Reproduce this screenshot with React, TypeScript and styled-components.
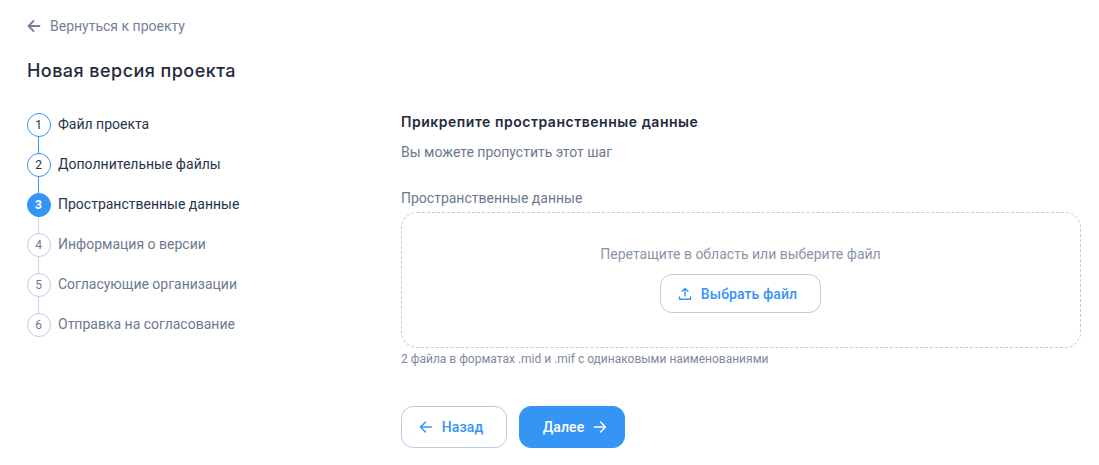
import React from 'react';
import styled, { createGlobalStyle } from 'styled-components';

const GlobalStyle = createGlobalStyle`
    html, body {
        margin: 0;
        padding: 0;
        background: #fff;
        font-family: Roboto, "Liberation Sans", sans-serif;
    }
`;

const Page = styled.div`
    width: 1099px;
    height: 465px;
    box-sizing: border-box;
    padding: 16px 18px 0 27px;
    overflow: hidden;
`;

const BackLink = styled.a`
    display: flex;
    align-items: center;
    gap: 9px;
    height: 20px;
    font-size: 14px;
    line-height: 20px;
    color: #74809a;
`;

const Title = styled.h1`
    margin: 22px 0 0;
    font-family: Inter, sans-serif;
    font-size: 18px;
    line-height: 26px;
    font-weight: 500;
    letter-spacing: 0.45px;
    color: #1f2b3d;
`;

const Columns = styled.div`
    display: grid;
    grid-template-columns: 374px 680px;
    margin-top: 28px;
`;

const Steps = styled.ol`
    list-style: none;
    margin: 1px 0 0 -0.5px;
    padding: 0;
    display: flex;
    flex-direction: column;
    gap: 16px;
`;

const Step = styled.li<{ $state: 'done' | 'active' | 'todo' }>`
    display: flex;
    align-items: center;
    gap: 7.5px;
    height: 24px;
    position: relative;
    font-size: 14px;
    color: ${(p) => (p.$state === 'todo' ? '#6d7990' : '#27344a')};

    &:not(:last-child)::after {
        content: '';
        position: absolute;
        left: 11.5px;
        top: 24px;
        width: 1px;
        height: 16px;
        background: ${(p) => (p.$state === 'done' ? '#3595f5' : '#c9d8ec')};
    }
`;

const StepLabel = styled.span`
    margin-bottom: 2px;
`;

const StepNumber = styled.span<{ $state: 'done' | 'active' | 'todo' }>`
    box-sizing: border-box;
    flex: none;
    width: 24px;
    height: 24px;
    border-radius: 50%;
    display: flex;
    align-items: center;
    justify-content: center;
    font-size: 12px;
    font-weight: ${(p) => (p.$state === 'active' ? 700 : 400)};
    color: ${(p) => (p.$state === 'active' ? '#fff' : p.$state === 'done' ? '#27344a' : '#6d7990')};
    background: ${(p) => (p.$state === 'active' ? '#3595f5' : '#fff')};
    border: 1px solid ${(p) => (p.$state === 'todo' ? '#c0cde2' : '#3595f5')};
`;

const Form = styled.section`
    display: flex;
    flex-direction: column;
`;

const FormTitle = styled.h2`
    margin: 0;
    font-family: Inter, sans-serif;
    font-size: 14px;
    line-height: 20px;
    font-weight: 600;
    letter-spacing: 0.52px;
    color: #1f2b3d;
`;

const FormNote = styled.p`
    margin: 10px 0 0;
    font-size: 14px;
    line-height: 20px;
    color: #6d7990;
`;

const FieldLabel = styled.label`
    margin-top: 26px;
    font-size: 14px;
    line-height: 20px;
    color: #6d7990;
`;

const DropZone = styled.div`
    box-sizing: border-box;
    margin-top: 4px;
    height: 136px;
    border: 1px dashed #bccbe2;
    border-radius: 16px;
    display: flex;
    flex-direction: column;
    align-items: center;
    padding-top: 31px;
    padding-right: 1px;
`;

const DropText = styled.span`
    font-size: 14px;
    line-height: 20px;
    color: #8b94a7;
`;

const Button = styled.button<{ $primary?: boolean; $width: number; $iconSide: 'left' | 'right' }>`
    box-sizing: border-box;
    display: flex;
    align-items: center;
    justify-content: center;
    gap: 9px;
    width: ${(p) => p.$width}px;
    padding: ${(p) => (p.$iconSide === 'left' ? '0 6px 0 0' : '0 0 0 6px')};
    font-family: inherit;
    font-size: 14px;
    font-weight: 500;
    letter-spacing: 0.1px;
    color: ${(p) => (p.$primary ? '#fff' : '#3595f5')};
    background: ${(p) => (p.$primary ? '#3595f5' : '#fff')};
    border: 1px solid ${(p) => (p.$primary ? '#3595f5' : '#bccbe2')};
    border-radius: 12px;
`;

const UploadButton = styled(Button)`
    height: 39px;
    margin-top: 10px;
`;

const NavButton = styled(Button)`
    height: 42px;
`;

const Hint = styled.p`
    margin: 3px 0 0;
    font-size: 12px;
    line-height: 16px;
    color: #808a9c;
`;

const Actions = styled.div`
    display: flex;
    gap: 12px;
    margin-top: 39px;
`;

const ArrowLeft = ({ weight = 1.5 }: { weight?: number }) => (
    <svg width="14" height="14" viewBox="0 0 14 14" fill="none" stroke="currentColor" strokeWidth={weight} strokeLinecap="round" strokeLinejoin="round">
        <path d="M12.5 7H1.5M6.5 2 1.5 7l5 5" />
    </svg>
);

const ArrowRight = () => (
    <svg width="14" height="14" viewBox="0 0 14 14" fill="none" stroke="currentColor" strokeWidth="1.5" strokeLinecap="round" strokeLinejoin="round">
        <path d="M1.5 7h11M7.5 2l5 5-5 5" />
    </svg>
);

const UploadIcon = () => (
    <svg width="14" height="14" viewBox="0 0 14 14" fill="none" stroke="currentColor" strokeWidth="1.4" strokeLinecap="round" strokeLinejoin="round">
        <path d="M7 9V1.5M4 4.2 7 1.5l3 2.7M1.5 10v2.2h11V10" />
    </svg>
);

const stepTitles = [
    'Файл проекта',
    'Дополнительные файлы',
    'Пространственные данные',
    'Информация о версии',
    'Согласующие организации',
    'Отправка на согласование',
];

const stateOf = (index: number) => (index < 2 ? 'done' : index === 2 ? 'active' : 'todo');

export default function App() {
    return (
        <Page>
            <GlobalStyle />
            <BackLink>
                <ArrowLeft weight={1.8} />
                Вернуться к проекту
            </BackLink>
            <Title>Новая версия проекта</Title>
            <Columns>
                <Steps>
                    {stepTitles.map((title, i) => (
                        <Step key={title} $state={stateOf(i)}>
                            <StepNumber $state={stateOf(i)}>{i + 1}</StepNumber>
                            <StepLabel>{title}</StepLabel>
                        </Step>
                    ))}
                </Steps>
                <Form>
                    <FormTitle>Прикрепите пространственные данные</FormTitle>
                    <FormNote>Вы можете пропустить этот шаг</FormNote>
                    <FieldLabel>Пространственные данные</FieldLabel>
                    <DropZone>
                        <DropText>Перетащите в область или выберите файл</DropText>
                        <UploadButton $width={161} $iconSide="left">
                            <UploadIcon />
                            Выбрать файл
                        </UploadButton>
                    </DropZone>
                    <Hint>2 файла в форматах .mid и .mif с одинаковыми наименованиями</Hint>
                    <Actions>
                        <NavButton $width={106} $iconSide="left">
                            <ArrowLeft />
                            Назад
                        </NavButton>
                        <NavButton $primary $width={106} $iconSide="right">
                            Далее
                            <ArrowRight />
                        </NavButton>
                    </Actions>
                </Form>
            </Columns>
        </Page>
    );
}
